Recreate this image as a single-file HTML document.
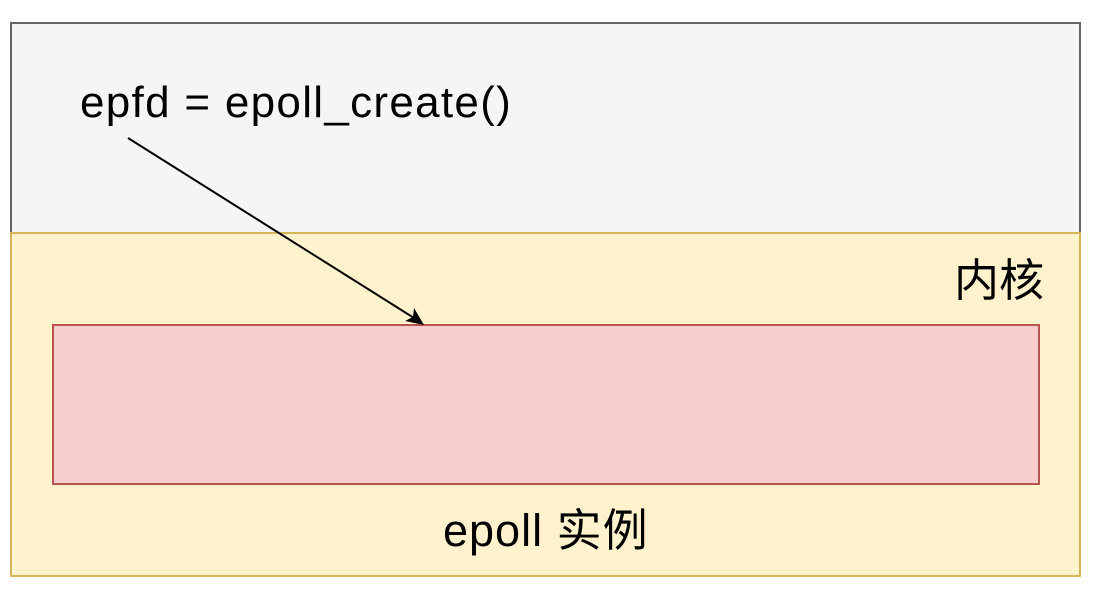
<!DOCTYPE html>
<html><head><meta charset="utf-8"><style>
body{margin:0;width:1111px;height:597px;background:#fff;position:relative;overflow:hidden;font-family:"Liberation Sans","Noto Sans CJK SC",sans-serif;}
div{position:absolute;box-sizing:border-box}
</style></head><body>
<div style="left:10px;top:22px;width:1071px;height:212px;background:#f5f5f5;border:2px solid #666;border-bottom:none"></div>
<div style="left:10px;top:232px;width:1071px;height:345px;background:#fff2cc;border:2px solid #d6b656"></div>
<div style="left:52px;top:324px;width:988px;height:161px;background:#f8cecc;border:2px solid #b85450"></div>
<div style="left:80px;top:78px;font-size:44px;letter-spacing:1.3px;color:#000;white-space:nowrap">epfd = epoll_create()</div>
<div style="left:954px;top:244px;font-size:45px;color:#000;white-space:nowrap">内核</div>
<div style="left:443px;top:494px;font-size:45px;letter-spacing:1px;color:#000;white-space:nowrap">epoll 实例</div>
<svg style="position:absolute;left:0;top:0" width="1111" height="597">
<line x1="128" y1="138" x2="414" y2="318" stroke="#000" stroke-width="2"/>
<polygon points="424,325 405,321 413,317 414,308" fill="#000"/>
</svg>
</body></html>
